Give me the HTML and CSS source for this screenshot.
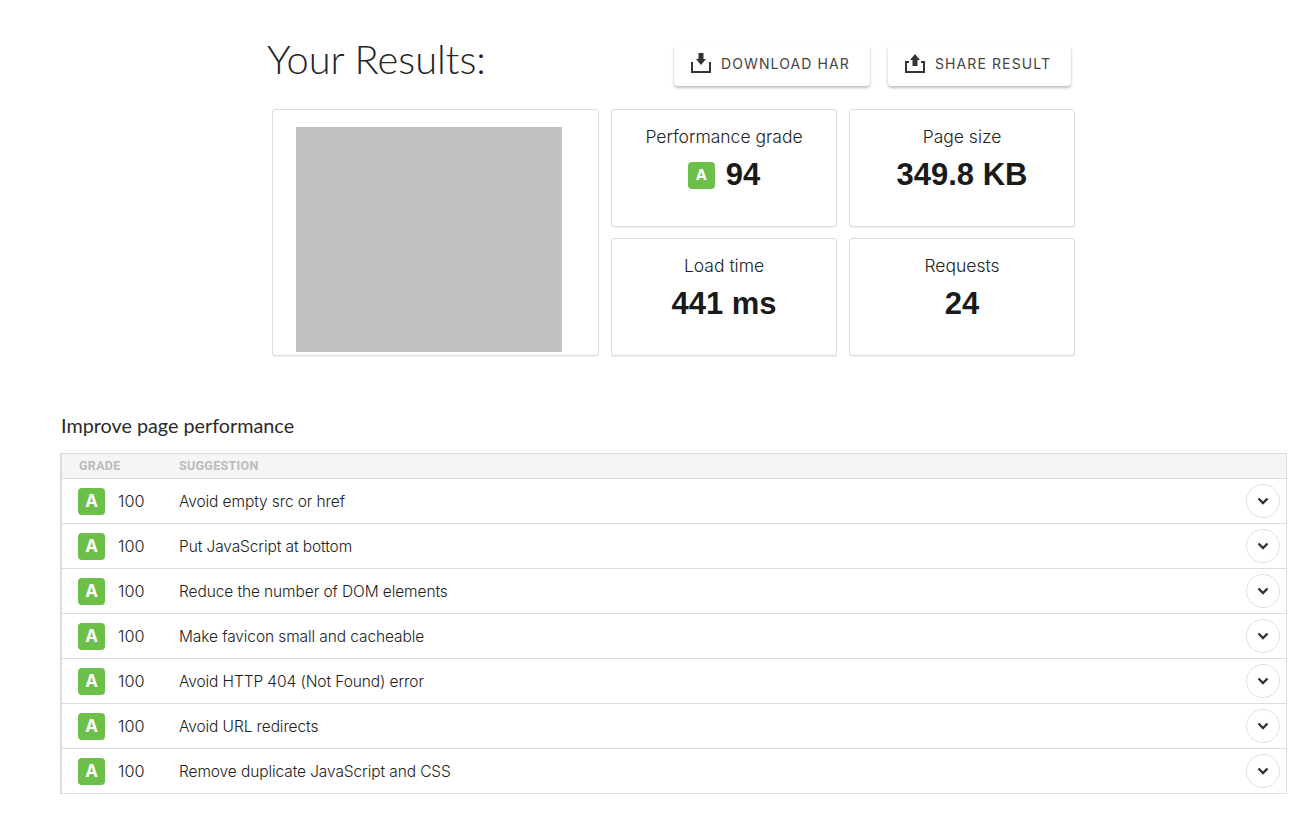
FILE: index.html
```html
<!DOCTYPE html>
<html lang="en">
<head>
<meta charset="utf-8">
<title>Your Results</title>
<link rel="stylesheet" href="styles.css">
</head>
<body>
<main class="page">
  <section class="results">
    <header class="results-head">
      <h1 class="title">Your Results:</h1>
      <div class="actions">
        <button class="btn btn-download">
          <svg class="btn-icon" viewBox="0 0 20 20"><path d="M7.500 0h5v6H15l-5 6-5-6h2.500z"/><path d="M0 9h2v9h16V9h2v11H0z"/></svg>
          DOWNLOAD HAR
        </button>
        <button class="btn btn-share">
          <svg class="btn-icon" viewBox="0 0 20 20"><path d="M10 1l5 6h-2.500v6h-5V7H5z"/><path d="M0 8h4v2H2v8h16v-8h-2V8h4v12H0z"/></svg>
          SHARE RESULT
        </button>
      </div>
    </header>
    <div class="grid">
      <div class="card shot"><div class="shot-img"></div></div>
      <div class="card metric">
        <div class="metric-label">Performance grade</div>
        <div class="metric-value"><span class="badge badge-lg">A</span>94</div>
      </div>
      <div class="card metric">
        <div class="metric-label">Page size</div>
        <div class="metric-value">349.8 KB</div>
      </div>
      <div class="card metric">
        <div class="metric-label">Load time</div>
        <div class="metric-value">441 ms</div>
      </div>
      <div class="card metric">
        <div class="metric-label">Requests</div>
        <div class="metric-value">24</div>
      </div>
    </div>
  </section>
  <section class="improve">
    <h2 class="improve-title">Improve page performance</h2>
    <div class="table">
      <div class="thead"><span class="col-grade">GRADE</span><span>SUGGESTION</span></div>
      <div class="row"><span class="col-grade"><span class="badge">A</span><span class="score">100</span></span><span class="name">Avoid empty src or href</span><span class="toggle"><svg viewBox="0 0 12 8"><path d="M1.500 1.500L6 6l4.500-4.500"/></svg></span></div>
      <div class="row"><span class="col-grade"><span class="badge">A</span><span class="score">100</span></span><span class="name">Put JavaScript at bottom</span><span class="toggle"><svg viewBox="0 0 12 8"><path d="M1.500 1.500L6 6l4.500-4.500"/></svg></span></div>
      <div class="row"><span class="col-grade"><span class="badge">A</span><span class="score">100</span></span><span class="name">Reduce the number of DOM elements</span><span class="toggle"><svg viewBox="0 0 12 8"><path d="M1.500 1.500L6 6l4.500-4.500"/></svg></span></div>
      <div class="row"><span class="col-grade"><span class="badge">A</span><span class="score">100</span></span><span class="name">Make favicon small and cacheable</span><span class="toggle"><svg viewBox="0 0 12 8"><path d="M1.500 1.500L6 6l4.500-4.500"/></svg></span></div>
      <div class="row"><span class="col-grade"><span class="badge">A</span><span class="score">100</span></span><span class="name">Avoid HTTP 404 (Not Found) error</span><span class="toggle"><svg viewBox="0 0 12 8"><path d="M1.500 1.500L6 6l4.500-4.500"/></svg></span></div>
      <div class="row"><span class="col-grade"><span class="badge">A</span><span class="score">100</span></span><span class="name">Avoid URL redirects</span><span class="toggle"><svg viewBox="0 0 12 8"><path d="M1.500 1.500L6 6l4.500-4.500"/></svg></span></div>
      <div class="row"><span class="col-grade"><span class="badge">A</span><span class="score">100</span></span><span class="name">Remove duplicate JavaScript and CSS</span><span class="toggle"><svg viewBox="0 0 12 8"><path d="M1.500 1.500L6 6l4.500-4.500"/></svg></span></div>
    </div>
  </section>
</main>
</body>
</html>
```
FILE: styles.css
```css
* { box-sizing: border-box; }
html, body { margin: 0; padding: 0; background: #fff; }
body { font-family: Inter, "Liberation Sans", sans-serif; color: #1b1b1b; }
.page { width: 1304px; height: 816px; padding: 0 17px 0 60px; overflow: hidden; }

.results { width: 815px; margin-left: 207px; }
.results-head { display: flex; height: 109px; align-items: flex-start; }
.title {
  margin: 35px 0 0 0;
  font-family: Lato, sans-serif;
  font-weight: 300;
  font-size: 39.800px;
  line-height: 48px;
  color: #1f2426;
  width: 407px;
}
.actions { display: flex; gap: 18px; margin-top: 45px; }
.btn {
  display: flex;
  align-items: center;
  height: 41px;
  padding: 0 0 5px 17px;
  border: 0;
  border-radius: 4px;
  background: #fff;
  font-family: Inter, sans-serif;
  font-weight: 400;
  font-size: 14px;
  letter-spacing: 1.100px;
  color: #444;
  box-shadow: 0 2px 3px rgba(0,0,0,.26), 0 0 1px rgba(0,0,0,.05);
  gap: 10px;
}
.btn-download { width: 196px; }
.btn-share { width: 183px; }
.btn-icon { width: 20px; height: 20px; fill: #333; flex: none; }

.grid {
  display: grid;
  grid-template-columns: 327px 226px 226px;
  grid-template-rows: 118px 118px;
  gap: 11px 12px;
  margin-left: 5px;
}
.card {
  border: 1px solid #dcdcdc;
  border-radius: 3px;
  background: #fff;
  box-shadow: 0 1px 1px rgba(0,0,0,.06);
}
.shot { grid-row: 1 / span 2; padding: 17px 0 3px 23px; }
.shot-img { width: 266px; height: 225px; background: #c1c1c1; }
.metric { text-align: center; padding-top: 16px; }
.metric-label { font-size: 17.500px; line-height: 22px; font-weight: 300; color: #222; }
.metric-value {
  margin-top: 7px;
  font-family: "Liberation Sans", Arial, sans-serif;
  font-size: 31px;
  line-height: 40px;
  font-weight: 700;
  color: #1a1a1a;
  display: flex;
  justify-content: center;
  align-items: center;
}

.badge {
  display: inline-flex;
  align-items: center;
  justify-content: center;
  width: 27px;
  height: 27px;
  border-radius: 4px;
  background: #6cc04a;
  color: #fff;
  font-family: Inter, sans-serif;
  font-weight: 700;
  font-size: 17px;
  flex: none;
}
.badge-lg { font-size: 15px; margin-right: 11px; }

.improve { margin-top: 57px; }
.improve-title {
  margin: 0 0 16px 1px;
  font-family: Lato, sans-serif;
  font-weight: 400;
  font-size: 19.800px;
  line-height: 24px;
  color: #2a2a2a;
}
.table { border: solid #dcdcdc; border-width: 1px 1px 1px 2px; width: 1227px; }
.thead {
  display: flex;
  align-items: center;
  height: 24px;
  padding-bottom: 2px;
  background: #f5f5f5;
  font-family: Roboto, sans-serif;
  font-size: 12.500px;
  font-weight: 700;
  letter-spacing: .3px;
  color: #bbb;
  padding-left: 17px;
}
.thead .col-grade { width: 100px; }
.col-grade { width: 101px; display: flex; align-items: center; flex: none; }
.row {
  display: flex;
  align-items: center;
  height: 45px;
  border-top: 1px solid #dcdcdc;
  padding-left: 16px;
  padding-right: 6px;
}
.score { margin-left: 13px; font-size: 16.300px; font-weight: 300; color: #222; }
.name { flex: 1; font-size: 15.500px; letter-spacing: -.1px; font-weight: 300; color: #222; }
.toggle {
  display: flex;
  align-items: center;
  justify-content: center;
  width: 34px;
  height: 34px;
  border: 1px solid #e0e0e0;
  border-radius: 50%;
}
.toggle svg { width: 12px; height: 8px; fill: none; stroke: #333; stroke-width: 2.400; }
```
